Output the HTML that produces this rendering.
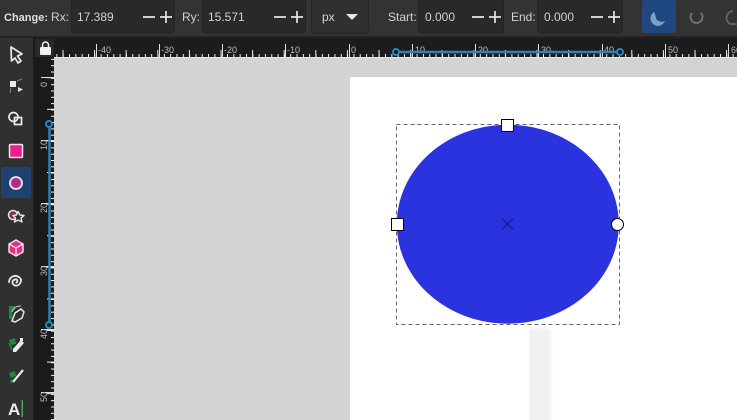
<!DOCTYPE html>
<html><head><meta charset="utf-8">
<style>
html,body{margin:0;padding:0;background:#303030;}
body{width:737px;height:420px;overflow:hidden;}
svg{display:block;}
text{font-family:"Liberation Sans",sans-serif;}
</style></head><body>
<svg width="737" height="420" viewBox="0 0 737 420" xmlns="http://www.w3.org/2000/svg">
<defs>
<pattern id="hminor" x="-0.5" y="0" width="6.32" height="20" patternUnits="userSpaceOnUse"><rect x="0" y="0" width="1" height="20" fill="#f0f0f0"/></pattern>
<pattern id="hmed" x="-0.7" y="0" width="31.6" height="20" patternUnits="userSpaceOnUse"><rect x="0" y="0" width="1" height="20" fill="#f0f0f0"/></pattern>
<pattern id="vminor" x="0" y="2" width="20" height="6.32" patternUnits="userSpaceOnUse"><rect x="0" y="0" width="20" height="1" fill="#f0f0f0"/></pattern>
<pattern id="vmed" x="0" y="14" width="20" height="31.6" patternUnits="userSpaceOnUse"><rect x="0" y="0" width="20" height="1" fill="#f0f0f0"/></pattern>
<linearGradient id="shadow" x1="0" x2="1" y1="0" y2="0">
<stop offset="0" stop-color="#ffffff"/><stop offset="0.12" stop-color="#eff0f2"/><stop offset="0.8" stop-color="#f0f1f3"/><stop offset="1" stop-color="#ffffff"/>
</linearGradient>
<linearGradient id="shadowTop" x1="0" x2="0" y1="0" y2="1">
<stop offset="0" stop-color="#ffffff"/><stop offset="1" stop-color="#ffffff" stop-opacity="0"/>
</linearGradient>
</defs>
<rect width="737" height="420" fill="#303030"/>
<rect x="0" y="0" width="737" height="37" fill="#333333"/>
<!-- top fields -->
<g fill="#292929" stroke="#242424">
<rect x="71.500" y="-3" width="103" height="36" rx="3"/>
<rect x="202.500" y="-3" width="103" height="36" rx="3"/>
<rect x="311.500" y="-3" width="57" height="36" rx="3" fill="#303030" stroke="#262626"/>
<rect x="418.500" y="-3" width="85" height="36" rx="3"/>
<rect x="537.500" y="-3" width="85" height="36" rx="3"/>
</g>
<g font-size="12" fill="#d2d2d2">
<text x="4" y="21" font-size="11" font-weight="bold" fill="#e0e0e0">Change:</text>
<text x="51" y="21">Rx:</text>
<text x="77" y="21">17.389</text>
<text x="182" y="21">Ry:</text>
<text x="208" y="21">15.571</text>
<text x="322" y="21">px</text>
<text x="388" y="21">Start:</text>
<text x="425" y="21">0.000</text>
<text x="511" y="21">End:</text>
<text x="544" y="21">0.000</text>
</g>
<!-- plus minus -->
<g stroke="#e6e6e6" stroke-width="1.700" fill="none">
<path d="M143 17H155M160 17H172M166 11V23"/>
<path d="M274 17H286M291 17H303M297 11V23"/>
<path d="M472 17H484M489 17H501M495 11V23"/>
<path d="M591 17H603M608 17H620M614 11V23"/>
</g>
<path d="M346 14H358L352 20Z" fill="#e8e8e8"/>
<!-- arc buttons -->
<rect x="642" y="0" width="34" height="33" rx="3" fill="#1f4880"/>
<path d="M654 12a7.500 7.500 0 1 0 11 9c-3 1.500-6 .5-8-1-1.500-2-1-5-3-8z" fill="#7ba1c8"/>
<path d="M692 13a6 6 0 1 0 9 0" fill="none" stroke="#707070" stroke-width="2"/>
<path d="M733 11a7 7 0 0 0-3 13h7" fill="none" stroke="#666" stroke-width="1.800"/>
<!-- rulers -->
<rect x="34" y="38" width="703" height="19" fill="#1c1c1c"/>
<rect x="0" y="36" width="737" height="2" fill="#232323"/>
<rect x="34" y="38" width="20" height="382" fill="#1a1a1a"/>
<rect x="33" y="38" width="1" height="382" fill="#1a1a1a"/>
<rect x="35" y="39" width="19" height="18" fill="#2a2a2a"/>
<!-- lock -->
<rect x="40" y="47" width="11" height="8" rx="1" fill="#f2f2f2"/>
<path d="M42.500 47v-2a3 3 0 0 1 6 0v2" fill="none" stroke="#f2f2f2" stroke-width="1.500"/>
<!-- h ruler ticks -->
<rect x="54" y="54" width="683" height="3" fill="url(#hminor)"/>
<rect x="54" y="50" width="683" height="7" fill="url(#hmed)"/>
<g fill="#e0e0e0">
<rect x="96" y="44" width="1" height="13"/><rect x="159" y="44" width="1" height="13"/><rect x="222" y="44" width="1" height="13"/><rect x="285" y="44" width="1" height="13"/><rect x="349" y="44" width="1" height="13"/><rect x="412" y="44" width="1" height="13"/><rect x="475" y="44" width="1" height="13"/><rect x="538" y="44" width="1" height="13"/><rect x="602" y="44" width="1" height="13"/><rect x="665" y="44" width="1" height="13"/><rect x="728" y="44" width="1" height="13"/>
</g>
<g font-size="9" fill="#bdbdbd">
<text x="98" y="53">-40</text><text x="161" y="53">-30</text><text x="224" y="53">-20</text><text x="287" y="53">-10</text><text x="351" y="53">0</text><text x="415" y="53">10</text><text x="478" y="53">20</text><text x="541" y="53">30</text><text x="604" y="53">40</text><text x="668" y="53">50</text><text x="731" y="53">60</text>
</g>
<!-- v ruler ticks -->
<rect x="51" y="57" width="3" height="363" fill="url(#vminor)"/>
<rect x="47" y="57" width="7" height="363" fill="url(#vmed)"/>
<g fill="#e0e0e0">
<rect x="41" y="77" width="13" height="1"/><rect x="41" y="140" width="13" height="1"/><rect x="41" y="203" width="13" height="1"/><rect x="41" y="266" width="13" height="1"/><rect x="41" y="329" width="13" height="1"/><rect x="41" y="392" width="13" height="1"/>
</g>
<g font-size="9" fill="#bdbdbd">
<text transform="translate(47,87) rotate(-90)">0</text>
<text transform="translate(47,150) rotate(-90)">10</text>
<text transform="translate(47,213) rotate(-90)">20</text>
<text transform="translate(47,276) rotate(-90)">30</text>
<text transform="translate(47,339) rotate(-90)">40</text>
<text transform="translate(47,402) rotate(-90)">50</text>
</g>
<!-- selection bars -->
<g stroke="#2c86bd" fill="#1c1c1c">
<path d="M396 52H620" stroke-width="2.400" fill="none"/>
<circle cx="396" cy="52" r="3" stroke-width="2"/>
<circle cx="620" cy="52" r="3" stroke-width="2"/>
<path d="M49.500 124V325" stroke-width="2.400" fill="none"/>
<circle cx="49" cy="124" r="3" stroke-width="2"/>
<circle cx="49" cy="325" r="3" stroke-width="2"/>
</g>
<!-- canvas -->
<rect x="54" y="57" width="683" height="363" fill="#d3d3d3"/>
<rect x="54" y="57" width="683" height="1" fill="#e8e8e8"/>
<rect x="350" y="77" width="387" height="343" fill="#ffffff"/>
<rect x="528" y="324" width="25" height="96" fill="url(#shadow)"/>
<rect x="528" y="324" width="25" height="8" fill="url(#shadowTop)"/>
<ellipse cx="507.800" cy="224.200" rx="111" ry="99.500" fill="#2a33dd"/>
<rect x="396.500" y="124.500" width="223" height="200" fill="none" stroke="#666" stroke-width="1" stroke-dasharray="4 3"/>
<path d="M502 218.500L513 229.500M513 218.500L502 229.500" stroke="#111a70" stroke-width="1" fill="none"/>
<rect x="501.500" y="119.500" width="12" height="12" fill="#fff" stroke="#000"/>
<rect x="391.500" y="218.500" width="12" height="12" fill="#fff" stroke="#000"/>
<circle cx="617.500" cy="224.500" r="6" fill="#fff" stroke="#000"/>
<!-- left tools -->
<path d="M11 47L22 54L17.500 56L21 61L18 63L15 58L11.500 61Z" fill="#303030" stroke="#ececec" stroke-width="1.700" stroke-linejoin="round"/>
<g>
<rect x="10" y="81" width="6" height="6" fill="#ececec"/>
<path d="M17 81L22 79M11 88L10 93" stroke="#888" fill="none"/>
<path d="M18 87L23 89.500L18 92Z" fill="#e0e0e0"/>
</g>
<g fill="none" stroke="#ececec" stroke-width="1.700">
<circle cx="13.500" cy="117" r="4.500"/>
<rect x="14.500" y="117.500" width="7" height="7"/>
</g>
<rect x="9.500" y="144.500" width="13" height="13" rx="1" fill="#ec1e8c" stroke="#f3e3ea" stroke-width="1.500"/>
<rect x="1" y="167" width="30" height="31" rx="3" fill="#1f4272"/>
<circle cx="16" cy="183" r="6" fill="#b42a86" stroke="#f0e6ee" stroke-width="1.800"/>
<g stroke="#e4e4e4" stroke-width="1.500" stroke-linejoin="round">
<circle cx="13" cy="215" r="4.500" fill="#8a2a56"/>
<path d="M18 211.500L20 215L24 215.500L21 218L22 222L18 220L14.500 222L15.500 218L13 215.500L16.500 215Z" fill="#303030"/>
</g>
<path d="M16 240L23 244V252L16 256L9 252V244Z" fill="#ec2a8c" stroke="#f0e0e8" stroke-width="1.500" stroke-linejoin="round"/>
<path d="M9 244L16 248L23 244M16 248V256" fill="none" stroke="#f4e8ee" stroke-width="1.300"/>
<path d="M16.500 282.500a1.500 1.500 0 0 0-1.500-3a3 3 0 0 0-2.500 3.500a4 4 0 0 0 5 2.500a6 6 0 0 0 3.500-6a6.500 6.500 0 0 0-7-3.500a6.500 6.500 0 0 0-5 6" fill="none" stroke="#e4e4e4" stroke-width="1.900" stroke-linecap="round"/>
<g>
<rect x="9" y="306" width="3" height="13" fill="#1f8a3a"/>
<rect x="9" y="306" width="6" height="4" fill="#1f8a3a"/>
<path d="M12 321L15 313L21 309L24 312L22 318L15 322Z" fill="#303030" stroke="#e8e8e8" stroke-width="1.500"/>
<path d="M12 312Q14 306 21 306" stroke="#d0d0d0" fill="none"/>
</g>
<g>
<path d="M9 340L15 338L16 344L11 345Z" fill="#1f8a3a"/>
<path d="M13 349L21 340L24 343L16 352L13 352Z" fill="#ececec"/>
<rect x="20" y="338" width="3" height="3" fill="#ececec"/>
<path d="M9 343L12 350" stroke="#1f8a3a" stroke-width="1.500"/>
</g>
<g>
<path d="M9 373L15 371L16 376L11 378Z" fill="#1f8a3a"/>
<path d="M13 382L23 370" stroke="#ececec" stroke-width="2.200"/>
<path d="M10 380L14 379L11 384Z" fill="#1f8a3a"/>
</g>
<text x="8" y="415" font-size="17" font-weight="bold" fill="#ececec">A</text>
<rect x="21.500" y="400" width="1.500" height="17" fill="#2fae55"/>
</svg>
</body></html>
